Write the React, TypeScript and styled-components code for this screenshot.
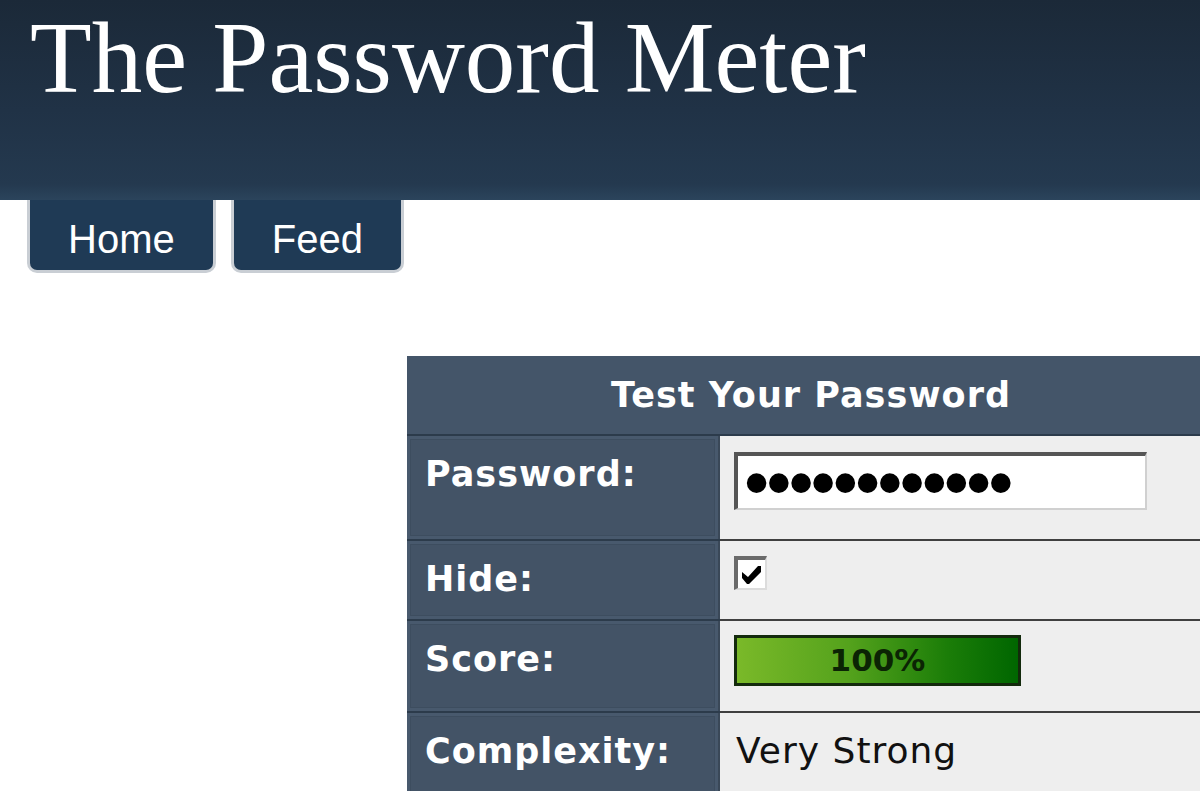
import React from "react";
import styled, { createGlobalStyle } from "styled-components";

const GlobalStyle = createGlobalStyle`
  html, body {
    margin: 0;
    padding: 0;
    background: #ffffff;
    overflow: hidden;
  }
  body {
    font-family: "DejaVu Sans", Verdana, sans-serif;
  }
`;

const Page = styled.div`
  width: 1200px;
  height: 791px;
  overflow: hidden;
  background: #ffffff;
`;

const Masthead = styled.header`
  height: 200px;
  box-sizing: border-box;
  padding: 8px 0 0 30px;
  background: linear-gradient(180deg, #1b2938 0%, #203246 55%, #24394f 92%, #2b445c 100%);
`;

const Title = styled.h1`
  margin: 0;
  font-family: "Liberation Serif", "Times New Roman", serif;
  font-weight: normal;
  font-size: 101px;
  line-height: 100px;
  color: #ffffff;
`;

const Tabs = styled.nav`
  display: flex;
  gap: 15px;
  padding-left: 27px;
`;

const Tab = styled.a`
  display: block;
  padding: 16px 38px 0;
  height: 54px;
  background: #1f3a55;
  border: 3px solid #c9ced4;
  border-top: none;
  border-radius: 0 0 10px 10px;
  font-family: "Liberation Sans", Arial, sans-serif;
  font-size: 40px;
  line-height: 46px;
  color: #ffffff;
  text-decoration: none;
`;

const Meter = styled.table`
  margin: 83px 0 0 407px;
  width: 808px;
  border-collapse: collapse;
  table-layout: fixed;
`;

const HeadCell = styled.th`
  height: 78px;
  padding: 0;
  background: #445569;
  border-bottom: 2px solid #2c3b4b;
  font-size: 35px;
  font-weight: bold;
  letter-spacing: 1px;
  color: #ffffff;
  text-align: center;
  vertical-align: middle;
`;

const Label = styled.td<{ $h: number }>`
  height: ${(p) => p.$h}px;
  box-sizing: border-box;
  padding: 18px 0 0 18px;
  background: #435366;
  border-bottom: 2px solid #2c3b4b;
  box-shadow: inset 0 0 0 3px #48596d, inset 0 0 0 4px #3d4d5f;
  font-size: 35px;
  font-weight: bold;
  letter-spacing: 1px;
  color: #ffffff;
  vertical-align: top;
`;

const Value = styled.td`
  box-sizing: border-box;
  padding: 0 0 0 14px;
  background: #eeeeee;
  border-bottom: 2px solid #3f3f3f;
  border-left: 2px solid #3a4858;
  vertical-align: middle;
  font-size: 36px;
  color: #111111;
`;

const PasswordBox = styled.input`
  display: block;
  box-sizing: border-box;
  width: 413px;
  height: 58px;
  margin: -14px 0 0;
  padding: 0 0 0 6px;
  background: #ffffff;
  border-style: solid;
  border-width: 4px 2px 2px 4px;
  border-color: #555555 #d0d0d0 #d0d0d0 #555555;
  font-family: "Liberation Sans", Arial, sans-serif;
  font-size: 72px;
  line-height: 50px;
  letter-spacing: -3px;
  color: #000000;
  outline: none;
`;

const CheckBox = styled.span`
  display: flex;
  align-items: center;
  justify-content: center;
  box-sizing: border-box;
  width: 33px;
  height: 34px;
  margin-top: -14px;
  background: #ffffff;
  border-style: solid;
  border-width: 4px 2px 2px 4px;
  border-color: #6a6a6a #dcdcdc #dcdcdc #6a6a6a;
`;

const Bar = styled.div`
  box-sizing: border-box;
  width: 287px;
  height: 51px;
  margin-top: -12px;
  border: 3px solid #132a0c;
  background: linear-gradient(90deg, #7ab929 0%, #54a21c 40%, #1b7d08 75%, #006600 100%);
  display: flex;
  align-items: center;
  justify-content: center;
  font-size: 31px;
  font-weight: bold;
  color: #0b2404;
`;

const Complexity = styled.span`
  display: block;
  margin: -14px 0 0 2px;
  letter-spacing: 1px;
`;

const Check = () => (
  <svg width="22" height="22" viewBox="0 0 22 22">
    <path d="M1 9 L7 14 L17 3 L20 3 L20 9 L8 21 L6 21 L1 15 Z" fill="#000000" />
  </svg>
);

const App = () => (
  <Page>
    <GlobalStyle />
    <Masthead>
      <Title>The Password Meter</Title>
    </Masthead>
    <Tabs>
      <Tab href="#">Home</Tab>
      <Tab href="#">Feed</Tab>
    </Tabs>
    <Meter>
      <colgroup>
        <col style={{ width: 312 }} />
        <col />
      </colgroup>
      <thead>
        <tr>
          <HeadCell colSpan={2}>Test Your Password</HeadCell>
        </tr>
      </thead>
      <tbody>
        <tr>
          <Label $h={105}>Password:</Label>
          <Value>
            <PasswordBox type="password" defaultValue="abcdefghijkl" readOnly />
          </Value>
        </tr>
        <tr>
          <Label $h={80}>Hide:</Label>
          <Value>
            <CheckBox>
              <Check />
            </CheckBox>
          </Value>
        </tr>
        <tr>
          <Label $h={92}>Score:</Label>
          <Value>
            <Bar>100%</Bar>
          </Value>
        </tr>
        <tr>
          <Label $h={90}>Complexity:</Label>
          <Value>
            <Complexity>Very Strong</Complexity>
          </Value>
        </tr>
      </tbody>
    </Meter>
  </Page>
);

export default App;
